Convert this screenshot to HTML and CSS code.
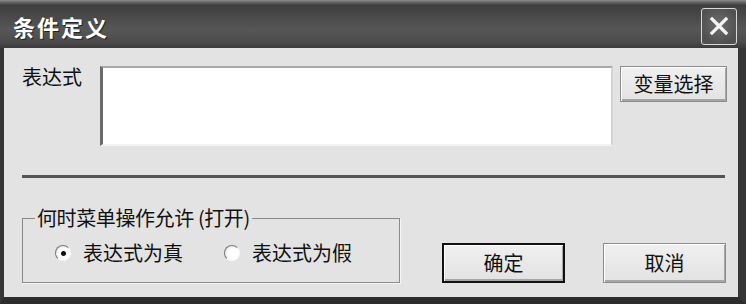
FILE: index.html
```html
<!DOCTYPE html>
<html>
<head>
<meta charset="utf-8">
<link rel="stylesheet" href="styles.css">
</head>
<body>
<div class="window">
  <div class="titlebar">
    <span class="title">条件定义</span>
    <button class="close" type="button">
      <svg width="22" height="22" viewBox="0 0 22 22"><path d="M4 4 L18 18 M18 4 L4 18" stroke="#f4f4f4" stroke-width="3.2" stroke-linecap="square"/></svg>
    </button>
  </div>
  <div class="body">
    <div class="expr-row">
      <span class="expr-label">表达式</span>
      <div class="expr-box"></div>
      <button class="btn btn-var" type="button">变量选择</button>
    </div>
    <div class="separator"></div>
    <div class="bottom-row">
      <fieldset class="group">
        <legend>何时菜单操作允许 (打开)</legend>
        <div class="radios">
          <span class="radio"><span class="dot checked"></span>表达式为真</span>
          <span class="radio radio-second"><span class="dot"></span>表达式为假</span>
        </div>
      </fieldset>
      <button class="btn btn-ok" type="button">确定</button>
      <button class="btn btn-cancel" type="button">取消</button>
    </div>
  </div>
</div>
</body>
</html>
```
FILE: styles.css
```css
html, body {
  margin: 0;
  padding: 0;
}
body {
  width: 746px;
  height: 304px;
  overflow: hidden;
  background: #2f2f2f;
  font-family: "Noto Sans CJK SC", "Noto Sans", sans-serif;
  color: #111;
}
.window {
  width: 746px;
  height: 304px;
  display: flex;
  flex-direction: column;
}
.titlebar {
  height: 48px;
  flex: none;
  box-sizing: border-box;
  display: flex;
  align-items: center;
  justify-content: space-between;
  padding: 4px 9px 0 13px;
  background: linear-gradient(#8c8c8c 0, #6a6a6a 2px, #3e3e3e 5px, #474747 14px, #565656 30px, #4b4b4b 42px, #3a3a3a 48px);
}
.title {
  color: #fff;
  font-weight: bold;
  font-size: 22px;
  line-height: 26px;
  letter-spacing: 2px;
  text-shadow: 1px 1px 0 #222;
}
.close {
  width: 36px;
  height: 37px;
  box-sizing: border-box;
  margin: 0;
  padding: 0;
  border: 1px solid #d8d8d8;
  border-radius: 3px;
  background: radial-gradient(circle at 50% 45%, #6e6e6e, #505050 75%);
  display: flex;
  align-items: center;
  justify-content: center;
}
.body {
  flex: 1;
  box-sizing: border-box;
  background: #e3e3e3;
  border-left: 4px solid #363636;
  border-right: 8px solid #363636;
  border-bottom: 7px solid #2c2c2c;
  padding: 18px 11px 0 18px;
  display: flex;
  flex-direction: column;
}
.expr-row {
  display: flex;
  align-items: flex-start;
  height: 80px;
}
.expr-label {
  width: 78px;
  font-size: 20px;
  line-height: 22px;
}
.expr-box {
  width: 513px;
  height: 80px;
  box-sizing: border-box;
  background: #fff;
  border-top: 2px solid #a8a8a8;
  border-left: 3px solid #6a6a6a;
  border-right: 2px solid #d4d4d4;
  border-bottom: 2px solid #f2f2f2;
}
.btn {
  font-family: inherit;
  font-size: 20px;
  line-height: 1;
  color: #111;
  margin: 0;
  padding: 0;
  box-sizing: border-box;
  background: linear-gradient(#f0f0f0, #e2e2e2);
  border: 1px solid #8c8c8c;
  box-shadow: inset 1px 1px 0 #fff, inset -1px -2px 0 #a6a6a6;
}
.btn-var {
  margin-left: 7px;
  width: 107px;
  height: 36px;
}
.separator {
  margin-top: 29px;
  margin-right: 2px;
  height: 3px;
  flex: none;
  background: #545454;
}
.bottom-row {
  margin-top: 30px;
  display: flex;
  align-items: flex-end;
}
.group {
  margin: 0;
  padding: 0;
  width: 378px;
  height: 75px;
  box-sizing: border-box;
  border: 1px solid #8a8a8a;
  box-shadow: 1px 1px 0 #f6f6f6;
}
.group legend {
  margin-left: 12px;
  padding: 0 2px;
  font-size: 20px;
  line-height: 20px;
  letter-spacing: -0.4px;
}
.radios {
  margin-top: 14px;
  padding-left: 32px;
  display: flex;
  align-items: center;
  font-size: 20px;
  line-height: 22px;
}
.radio {
  display: inline-flex;
  align-items: center;
}
.radio-second {
  margin-left: 41px;
}
.dot {
  width: 16px;
  height: 16px;
  box-sizing: border-box;
  border-radius: 50%;
  border: 1px solid;
  border-color: #7a7a7a #f8f8f8 #f8f8f8 #7a7a7a;
  background: radial-gradient(circle at 60% 60%, #fff 45%, #d8d8d8);
  margin-right: 12px;
  display: inline-flex;
  align-items: center;
  justify-content: center;
}
.dot.checked::after {
  content: "";
  width: 5px;
  height: 5px;
  border-radius: 50%;
  background: #111;
}
.btn-ok {
  margin-left: 42px;
  width: 123px;
  height: 40px;
  border: 2px solid #111;
}
.btn-cancel {
  margin-left: 38px;
  width: 123px;
  height: 40px;
}
```
